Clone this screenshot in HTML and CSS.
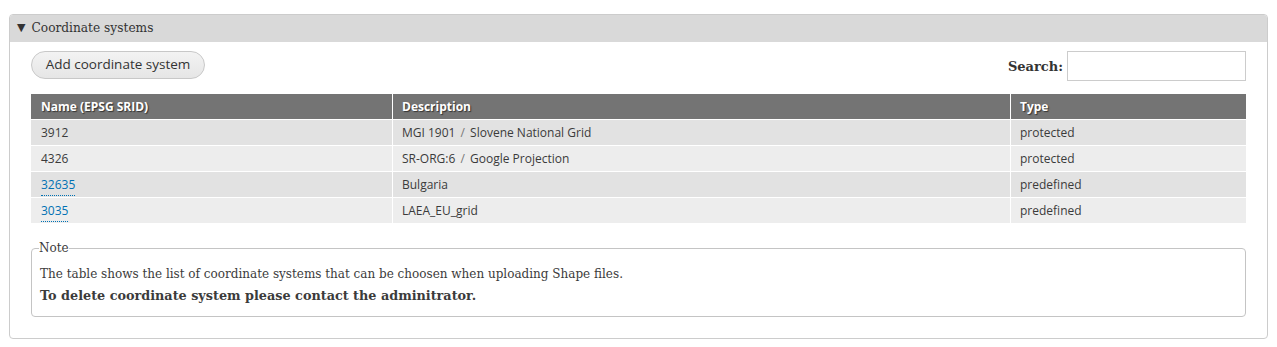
FILE: index.html
```html
<!DOCTYPE html>
<html>
<head>
<meta charset="utf-8">
<link rel="stylesheet" href="styles.css">
</head>
<body>
<div class="panel">
  <div class="panel-head"><span class="tri">▼</span>Coordinate systems</div>
  <div class="panel-body">
    <div class="toolbar">
      <button class="btn">Add coordinate system</button>
      <label class="search">Search: <input type="text" class="search-input"></label>
    </div>
    <table class="grid">
      <thead>
        <tr><th class="c1">Name (EPSG SRID)</th><th class="c2">Description</th><th class="c3">Type</th></tr>
      </thead>
      <tbody>
        <tr><td>3912</td><td>MGI 1901 <span class="sl">/</span> Slovene National Grid</td><td>protected</td></tr>
        <tr><td>4326</td><td>SR-ORG:6 <span class="sl">/</span> Google Projection</td><td>protected</td></tr>
        <tr><td><a class="lnk" href="#">32635</a></td><td>Bulgaria</td><td>predefined</td></tr>
        <tr><td><a class="lnk" href="#">3035</a></td><td>LAEA_EU_grid</td><td>predefined</td></tr>
      </tbody>
    </table>
    <fieldset class="note">
      <legend class="note-legend">Note</legend>
      <div class="note-line">The table shows the list of coordinate systems that can be choosen when uploading Shape files.</div>
      <div class="note-line strong">To delete coordinate system please contact the adminitrator.</div>
    </fieldset>
  </div>
</div>
</body>
</html>
```
FILE: styles.css
```css
html, body { margin: 0; padding: 0; background: #fff; }
body { padding: 14px 9px 0 9px; font-family: "DejaVu Serif", serif; color: #3b3b3b; }
.panel {
  border: 1px solid #ccc;
  border-radius: 4px;
  height: 325px;
  box-sizing: border-box;
  overflow: hidden;
}
.panel-head {
  background: #d9d9d9;
  height: 27px;
  line-height: 27px;
  padding-left: 7px;
  font-size: 12.2px;
  color: #333;
  display: flex;
  align-items: center;
}
.tri { font-size: 11px; font-family: "DejaVu Sans", sans-serif; margin-right: 6px; position: relative; top: -1px; }
.panel-body { padding: 9px 21px 0 21px; }
.toolbar { display: flex; justify-content: space-between; align-items: flex-start; height: 29px; margin-bottom: 14px; }
.btn {
  font-family: "Open Sans", sans-serif;
  font-size: 13.5px;
  color: #333;
  height: 28px;
  width: 174px;
  padding: 0 0 2px 0;
  border: 1px solid #c8c8c8;
  border-radius: 14px;
  background: linear-gradient(#f3f3f3, #e6e6e6);
}
.search { font-weight: bold; font-size: 13px; color: #333; display: flex; align-items: center; gap: 4px; }
.search-input {
  width: 179px; height: 30px; box-sizing: border-box;
  border: 1px solid #ccc; margin: 0; padding: 0 4px;
}
.grid { width: 1215px; border-collapse: collapse; font-family: "Open Sans", sans-serif; font-size: 12px; }
.grid th {
  background: #747474; color: #fff; text-align: left; font-weight: bold;
  height: 25px; padding: 0 9px; text-shadow: 1px 1px 1px #333;
  border-left: 1px solid #fff; border-bottom: 1px solid #fff;
}
.grid td {
  height: 25px; padding: 0 9px; color: #3b3b3b;
  border-left: 1px solid #fff; border-bottom: 1px solid #fff;
}
.grid th:first-child, .grid td:first-child { border-left: none; padding-left: 10px; }
.c1 { width: 342px; }
.c2 { width: 599px; }
.grid tbody tr:nth-child(odd) td { background: #e2e2e2; }
.grid tbody tr:nth-child(even) td { background: #ededed; }
.grid tbody tr:last-child td { border-bottom: none; }
.sl { color: #777; padding: 0 2px; }
.lnk { color: #0071b3; text-decoration: none; border-bottom: 1px dotted #0071b3; padding-bottom: 2px; }
.note {
  margin: 18px 0 0 0; padding: 9px 8px 10px 8px;
  border: 1px solid #c4c4c4; border-radius: 4px;
  font-size: 12px; color: #3b3b3b;
}
.note-legend { padding: 0; font-size: 12px; margin-left: -1px; }
.note-line { line-height: 21px; }
.strong { font-weight: bold; font-size: 12.8px; }
```
